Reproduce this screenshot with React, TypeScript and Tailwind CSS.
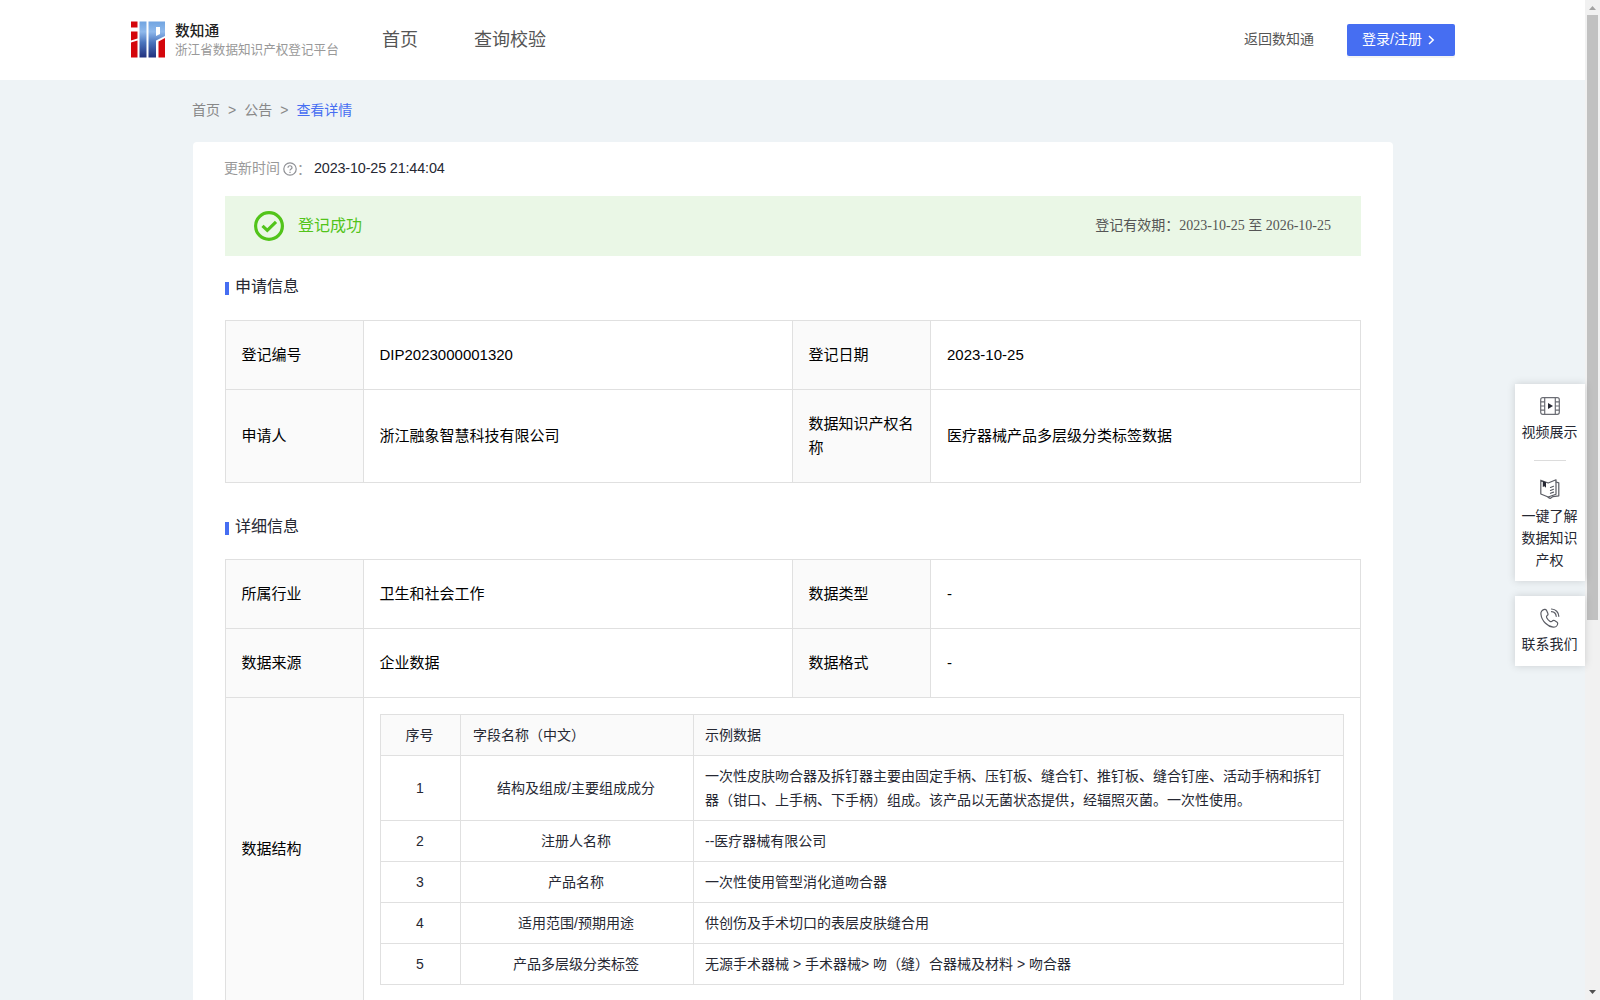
import React from "react";

function Logo() {
  return (
    <svg className="-mt-px" width="35" height="37" viewBox="0 0 35 37">
      <defs>
        <linearGradient id="logoBlue" gradientUnits="userSpaceOnUse" x1="0" y1="0" x2="0" y2="36">
          <stop offset="0" stopColor="#6fa3e0" />
          <stop offset="0.3" stopColor="#8fb9ec" />
          <stop offset="0.6" stopColor="#4a74bd" />
          <stop offset="1" stopColor="#22327f" />
        </linearGradient>
      </defs>
      <path fill="#d4060c" d="M0 .5h6.500v6H0zM0 10.500h6.500v7L0 19.500zM0 21.500l6.500-2v17H0z" />
      <path fill="url(#logoBlue)" d="M8.500 .5h7v36h-7z" />
      <path fill="url(#logoBlue)" fillRule="evenodd" d="M17.500 .5h16.500v14.500L25 19.500v17h-7.500zM25 6v9l4-2V6z" />
      <path fill="#d4060c" d="M27.500 20.500l6.500-3.500v19.500h-6.500z" />
    </svg>
  );
}

function Cell({ children, label = false, wide = false }: { children: React.ReactNode; label?: boolean; wide?: boolean }) {
  return (
    <div className={`flex items-center border-r border-b border-[#e0e0e0] pr-3 pb-px ${wide ? "pl-4" : "pl-[15.500px]"} ${label ? "bg-[#fafafa]" : "bg-white"}`}>
      <span>{children}</span>
    </div>
  );
}

function Heading({ children, className = "" }: { children: React.ReactNode; className?: string }) {
  return (
    <div className={`flex h-6 items-center text-[16px] text-[#262833] ${className}`}>
      <span className="mt-[3px] mr-1.5 h-[13px] w-1 bg-[#466ef2]" />
      {children}
    </div>
  );
}

const fields = [
  ["1", "结构及组成/主要组成成分", "一次性皮肤吻合器及拆钉器主要由固定手柄、压钉板、缝合钉、推钉板、缝合钉座、活动手柄和拆钉器（钳口、上手柄、下手柄）组成。该产品以无菌状态提供，经辐照灭菌。一次性使用。"],
  ["2", "注册人名称", "--医疗器械有限公司"],
  ["3", "产品名称", "一次性使用管型消化道吻合器"],
  ["4", "适用范围/预期用途", "供创伤及手术切口的表层皮肤缝合用"],
  ["5", "产品多层级分类标签", "无源手术器械 > 手术器械> 吻（缝）合器械及材料 > 吻合器"],
];

function FieldTable() {
  const box = "flex items-center border-r border-b border-[#e0e0e0] pb-px";
  return (
    <div className="w-[964px] border-t border-l border-[#e0e0e0] text-[14px] leading-6 text-[#262833]">
      <div className="grid h-[41px] grid-cols-[80px_233px_650px] bg-[#fafafa]">
        <div className={`${box} justify-center pr-0.5`}>序号</div>
        <div className={`${box} pl-3`}>字段名称（中文）</div>
        <div className={`${box} pl-[11px]`}>示例数据</div>
      </div>
      {fields.map(([n, name, sample], i) => (
        <div key={n} className={`grid grid-cols-[80px_233px_650px] ${i === 0 ? "h-[65px]" : "h-[41px]"}`}>
          <div className={`${box} justify-center pr-px`}>{n}</div>
          <div className={`${box} justify-center pr-0.5`}>{name}</div>
          <div className={`${box} pr-4 pl-[11px]`}>{sample}</div>
        </div>
      ))}
    </div>
  );
}

function FilmIcon() {
  return (
    <svg className="shrink-0" width="20" height="18" viewBox="0 0 20 18" fill="none" stroke="#6b6d74" strokeWidth="1.200">
      <rect x=".7" y=".7" width="18.600" height="16.600" rx="2" />
      <path d="M4.700.7v16.600M15.300.7v16.600M.7 4.800h4M.7 9h4M.7 13.200h4M15.300 4.800h4M15.300 9h4M15.300 13.200h4" />
      <path d="M8 6l5 3-5 3z" fill="#262833" stroke="none" />
    </svg>
  );
}

function BookIcon() {
  return (
    <svg className="block shrink-0" width="20" height="20" viewBox="0 0 20 20" fill="none" stroke="#5a5c64" strokeWidth="1.200" strokeLinejoin="round" strokeLinecap="round">
      <path d="M.8 1.200L8.200 4 16 .8v14.400L8.200 18 .8 15z" />
      <path d="M16 3l2.800.8v13l-5.800.8-2.800 1.800-2-1" />
      <path d="M10.500 8.500l3-1.200M10.500 11.500l3-1.200M10.500 14.300l3-1.200" />
      <path d="M2.800 2l3.200 1.200v5.600L4.400 7.300 2.800 8z" fill="#262833" stroke="none" />
    </svg>
  );
}

function PhoneIcon() {
  return (
    <svg className="shrink-0" width="20" height="20" viewBox="0 0 20 20" fill="none" stroke="#5a5c64" strokeWidth="1.200" strokeLinecap="round" strokeLinejoin="round">
      <path d="M4.600 1.300C2.500 1.500.6 3.500.9 6c.4 3.600 2 6.800 4.600 9.300 2.200 2.200 5 3.700 7.700 3.900 2.300.1 4.300-1.600 4.500-3.500.1-.8-.3-1.300-.9-1.700l-2.300-1.400c-.9-.5-1.600-.3-2.200.4-.7.9-1.300 1-2.200.4-1.500-1-2.600-2.200-3.400-3.700-.5-.9-.3-1.500.5-2.100.9-.6 1.100-1.300.7-2.200L6.600 2.400c-.4-.8-1-1.200-2-1.100z" />
      <path d="M11.500 1c4.200.2 7.200 3.300 7.300 7.300M11.500 3.700c2.700.2 4.500 2 4.700 4.600" />
    </svg>
  );
}

export default function App() {
  return (
    <div className="relative flex h-[1000px] w-[1600px] overflow-hidden bg-[#eef3f6] font-['Liberation_Sans','Noto_Sans_CJK_SC',sans-serif]">
      <div className="w-[1585px] shrink-0">
        <header className="flex h-20 items-center bg-white pl-[131px] text-[#555]">
          <Logo />
          <div className="ml-[9px] w-[170px]">
            <div className="text-[14.700px] leading-5 font-medium text-[#222]">数知通</div>
            <div className="text-[12.600px] leading-[18px] whitespace-nowrap text-[#999]">浙江省数据知识产权登记平台</div>
          </div>
          <nav className="ml-[37px] flex gap-[56px] text-[18px] leading-7">
            <span>首页</span>
            <span>查询校验</span>
          </nav>
          <span className="ml-[698px] pb-px text-[14px]">返回数知通</span>
          <button className="ml-[33px] flex h-8 w-[108px] items-center rounded-[2px] bg-[#466ef2] pb-px pl-[15px] text-[14px] text-white shadow-[0_2px_0_rgba(0,0,0,0.045)]">
            登录/注册
            <svg className="ml-[6px]" width="7" height="10" viewBox="0 0 7 10" fill="none" stroke="white" strokeWidth="1.500">
              <path d="M1 1l4.200 4L1 9" />
            </svg>
          </button>
        </header>

        <div className="flex h-[62px] items-center pb-px pl-[192px] text-[14px] text-[#888]">
          <span>首页</span>
          <span className="mx-2">&gt;</span>
          <span>公告</span>
          <span className="mx-2">&gt;</span>
          <span className="text-[#466ef2]">查看详情</span>
        </div>

        <main className="ml-[193px] h-[900px] w-[1200px] rounded-[4px] bg-white px-8">
          <div className="flex h-[54px] items-center text-[14px] text-[#999]">
            <span className="-ml-px pb-px">更新时间</span>
            <svg className="ml-[3px]" width="14" height="14" viewBox="0 0 14 14" fill="none" stroke="#8f9095" strokeWidth="1.200">
              <circle cx="7" cy="7" r="6.200" />
              <path d="M5 5.700c0-2.600 4-2.600 4 0C9 7 7 7 7 8.600M7 9.700v1.200" />
            </svg>
            <span className="w-[17px]">：</span>
            <span className="text-[14.400px] tracking-[-0.160px] text-[#262833]">2023-10-25 21:44:04</span>
          </div>

          <div className="flex h-[60px] items-center bg-[#eaf7e6] pr-[30px] pl-[29px]">
            <svg width="30" height="30" viewBox="0 0 30 30" fill="none" stroke="#52c41a" strokeWidth="3.200">
              <circle cx="15" cy="15" r="13.400" />
              <path d="M8.500 14.800l4.800 4.500 8.700-8.500" />
            </svg>
            <span className="ml-[14px] pb-px text-[16px] text-[#52c41a]">登记成功</span>
            <span className="ml-auto pb-0.5 font-['Liberation_Serif','Noto_Sans_CJK_SC',serif] text-[14px] text-[#555]">登记有效期：2023-10-25 至 2026-10-25</span>
          </div>

          <Heading className="mt-[19px]">申请信息</Heading>
          <section className="mt-[21px] grid w-[1136px] grid-cols-[138px_429px_138px_430px] grid-rows-[69px_93px] border-t border-l border-[#e0e0e0] text-[15px] leading-6 text-black">
            <Cell label>登记编号</Cell>
            <Cell>DIP2023000001320</Cell>
            <Cell label>登记日期</Cell>
            <Cell wide>2023-10-25</Cell>
            <Cell label>申请人</Cell>
            <Cell>浙江融象智慧科技有限公司</Cell>
            <Cell label>数据知识产权名称</Cell>
            <Cell wide>医疗器械产品多层级分类标签数据</Cell>
          </section>

          <Heading className="mt-8">详细信息</Heading>
          <section className="mt-5 grid w-[1136px] grid-cols-[138px_429px_138px_430px] grid-rows-[69px_69px_304px] border-t border-l border-[#e0e0e0] text-[15px] leading-6 text-black">
            <Cell label>所属行业</Cell>
            <Cell>卫生和社会工作</Cell>
            <Cell label>数据类型</Cell>
            <Cell wide>-</Cell>
            <Cell label>数据来源</Cell>
            <Cell>企业数据</Cell>
            <Cell label>数据格式</Cell>
            <Cell wide>-</Cell>
            <Cell label>数据结构</Cell>
            <div className="col-span-3 border-r border-b border-[#e0e0e0] pt-4 pl-4">
              <FieldTable />
            </div>
          </section>
        </main>
      </div>

      <aside className="absolute top-[384px] right-[15px] flex w-[70px] flex-col gap-[15px] text-center text-[14px] leading-[22px] text-[#262833]">
        <div className="flex h-[197px] flex-col items-center bg-white pt-[13px] shadow-[0_0_8px_rgba(0,0,0,0.15)]">
          <FilmIcon />
          <div className="mt-[6px] pr-px">视频展示</div>
          <div className="mt-[17px] h-px w-8 shrink-0 bg-[#dcdcdc]" />
          <div className="mt-[18px] h-5"><BookIcon /></div>
          <div className="mt-[6px] mr-px w-14">一键了解数据知识产权</div>
        </div>
        <div className="flex h-[70px] flex-col items-center bg-white pt-[12px] shadow-[0_0_8px_rgba(0,0,0,0.15)]">
          <PhoneIcon />
          <div className="mt-[5px] pr-px">联系我们</div>
        </div>
      </aside>

      <div className="flex w-[15px] flex-col items-center justify-between bg-[#f1f1f1]">
        <div className="flex flex-col items-center">
          <svg width="15" height="15"><path d="M4 10h7L7.500 6z" fill="#a3a3a3" /></svg>
          <div className="h-[605px] w-[11px] bg-[#c1c1c1]" />
        </div>
        <svg width="15" height="15"><path d="M4 5h7l-3.500 4z" fill="#505050" /></svg>
      </div>
    </div>
  );
}
